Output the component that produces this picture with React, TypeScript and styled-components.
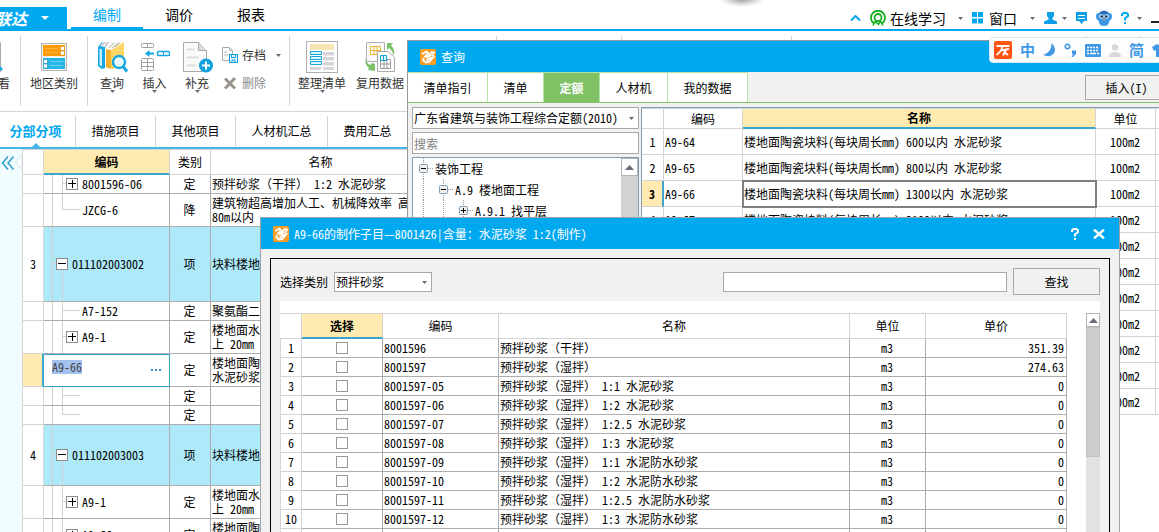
import React from "react";
import styled, { createGlobalStyle, css } from "styled-components";

const blue = "#00a8f0";
const lineBlue = "#3ba5d0";
const cream = "#ffebb0";
const light = "#d4d4d4";
const mid = "#adadad";
const panel = "#f1f1f1";
const sky = "#aee9fa";

const GlobalStyle = createGlobalStyle`
  *, *::before, *::after { box-sizing: border-box; }
  body {
    margin: 0;
    background: #fff;
    color: #000;
    font-family: "Noto Sans CJK SC", sans-serif;
    font-size: 12px;
    line-height: 14px;
    font-feature-settings: "hwid" 1;
  }
  button, input, select {
    font: inherit;
    font-feature-settings: "hwid" 1;
    color: inherit;
    margin: 0;
    padding: 0;
    border: 0;
    border-radius: 0;
    background: none;
    outline: none;
  }
  svg { display: block; flex: none; }
`;

/* ---------- page shell ---------- */

const Page = styled.div`
  position: relative;
  display: flex;
  flex-direction: column;
  height: 100vh;
  overflow: hidden;
  background: #fff;
`;

const TopBar = styled.header`
  display: flex;
  height: 31px;
  flex: none;
  border-bottom: 2px solid ${blue};
`;

const Brand = styled.button`
  display: flex;
  align-items: center;
  justify-content: flex-end;
  gap: 14px;
  width: 67px;
  height: 22px;
  margin: 7px 4px 0 0;
  padding-right: 18px;
  background: ${blue};
  color: #fff;
  font-size: 16px;
  font-weight: 700;
  font-style: italic;
  white-space: nowrap;
  overflow: hidden;
`;

const MenuTab = styled.button<{ $active?: boolean }>`
  width: 72px;
  height: 29px;
  font-size: 14px;
  color: ${(p) => (p.$active ? blue : "#000")};
  border-bottom: 2px solid ${(p) => (p.$active ? blue : "transparent")};
`;

const TopTools = styled.div`
  display: flex;
  align-items: center;
  gap: 9px;
  height: 29px;
  margin-left: auto;
  padding-top: 7px;
  overflow: hidden;
`;

const TopTool = styled.button<{ $gap?: number; $caretGap?: number }>`
  display: flex;
  align-items: center;
  gap: ${(p) => p.$gap ?? 5}px;
  font-size: 14px;
  white-space: nowrap;
  svg:last-child:not(:first-child) {
    margin-left: ${(p) => p.$caretGap ?? 0}px;
  }
`;

const TopShade = styled.svg`
  position: absolute;
  top: 0;
  left: 61%;
`;

/* ---------- ribbon ---------- */

const Ribbon = styled.div`
  display: flex;
  height: 81px;
  flex: none;
  overflow: hidden;
  border-bottom: 1px solid ${light};
`;

const RibbonGroup = styled.div<{ $w: number; $end?: boolean }>`
  display: flex;
  flex: none;
  width: ${(p) => p.$w}px;
  height: 70px;
  margin-top: 5px;
  justify-content: ${(p) => (p.$end ? "flex-end" : "flex-start")};
  padding-left: ${(p) => (p.$w > 70 ? 3 : 0)}px;
  border-right: 1px solid ${light};
  overflow: hidden;
`;

const RibbonButton = styled.button<{ $w: number }>`
  display: flex;
  flex-direction: column;
  align-items: center;
  flex: none;
  width: ${(p) => p.$w}px;
  height: 60px;
  padding-top: 4px;
  color: #333;
  white-space: nowrap;
`;

const RibbonIcon = styled.span`
  display: flex;
  align-items: center;
  justify-content: center;
  height: 34px;
  margin-bottom: 2px;
`;

const RibbonStack = styled.div`
  display: flex;
  flex-direction: column;
  gap: 14px;
  padding: 12px 0 0 4px;
`;

const SmallButton = styled.button<{ $muted?: boolean }>`
  display: flex;
  align-items: center;
  gap: 4px;
  height: 14px;
  color: ${(p) => (p.$muted ? "#8a8a8a" : "#333")};
  svg:last-child:not(:first-child) { margin-left: 6px; }
`;

/* ---------- section tabs ---------- */

const SectionTabs = styled.nav`
  display: flex;
  height: 37px;
  flex: none;
  align-items: flex-end;
  border-bottom: 2px solid #45b7e6;
`;

const SectionTab = styled.button<{ $w: number; $active?: boolean }>`
  position: relative;
  flex: none;
  width: ${(p) => p.$w}px;
  height: 31px;
  padding-bottom: 2px;
  border-right: 1px solid ${light};
  ${(p) =>
    p.$active &&
    css`
      font-size: 13px;
      font-weight: 700;
      color: ${blue};
      padding-right: 4px;
      &::after {
        content: "";
        position: absolute;
        left: 32px;
        bottom: 0;
        border: 4px solid transparent;
        border-top: 0;
        border-bottom-color: #45b7e6;
      }
    `}
`;

const Work = styled.main`
  display: flex;
  flex: 1;
  min-height: 0;
  overflow: hidden;
`;

const Rail = styled.aside`
  width: 22px;
  flex: none;
  background: #f0fcff;
`;

const GridArea = styled.div`
  flex: 1;
  border-left: 1px solid ${light};
`;

/* ---------- grids ---------- */

const Grid = styled.table`
  width: 100%;
  table-layout: fixed;
  border-collapse: separate;
  border-spacing: 0;
`;

const HeadCell = styled.th<{ $active?: boolean; $h: number }>`
  height: ${(p) => p.$h}px;
  padding: 0;
  font-weight: ${(p) => (p.$active ? 700 : 400)};
  border-top: 1px solid ${light};
  border-right: 1px solid ${light};
  border-bottom: ${(p) => (p.$active ? `2px solid ${lineBlue}` : `1px solid ${light}`)};
  background: ${(p) => (p.$active ? cream : "#fff")};
`;

const Cell = styled.td<{
  $h: number;
  $align?: string;
  $line?: string;
  $fill?: string;
  $flush?: boolean;
}>`
  height: ${(p) => p.$h}px;
  padding: ${(p) => (p.$flush ? "0" : "0 2px 0 1px")};
  text-align: ${(p) => p.$align ?? "left"};
  border-right: 1px solid ${(p) => p.$line ?? mid};
  border-bottom: 1px solid ${(p) => p.$line ?? mid};
  background: ${(p) => p.$fill ?? "transparent"};
  white-space: nowrap;
  overflow: hidden;
`;

const NumCell = styled(Cell)<{ $current?: boolean; $left?: boolean }>`
  padding: 0;
  text-align: center;
  border-color: ${light};
  ${(p) => p.$left && `border-left: 1px solid ${light};`}
  ${(p) =>
    p.$current &&
    css`
      background: ${cream};
      font-weight: 700;
      border-right: 2px solid ${lineBlue};
    `}
`;

const FramedCell = styled(Cell)`
  outline: 2px solid #808080;
  outline-offset: -1px;
`;

const TreeCell = styled.div<{ $h: number }>`
  display: flex;
  align-items: center;
  height: ${(p) => p.$h}px;
  overflow: hidden;
`;

const Expander = styled.button<{ $open?: boolean }>`
  position: relative;
  width: 12px;
  height: 12px;
  flex: none;
  margin-right: 4px;
  border: 1px solid #8c8c8c;
  background: #fff;
  ${(p) =>
    p.$open &&
    css`
      &::after {
        content: "";
        position: absolute;
        top: 11px;
        left: 5px;
        width: 1px;
        height: 40px;
        background: ${light};
      }
    `}
`;

const Editor = styled.div`
  display: flex;
  align-items: flex-start;
  justify-content: space-between;
  height: 32px;
  padding: 5px 7px 0 8px;
  background: #fff;
  border-top: 1px solid ${lineBlue};
`;

const EditorInput = styled.input`
  width: 30px;
  height: 14px;
  background: #a3c1ee;
  color: #444;
`;

const MoreButton = styled.button`
  width: 11px;
  height: 22px;
`;

/* full-width brackets keep their whole em inside half-width text */
const Wide = styled.span`
  font-feature-settings: normal;
`;

const Label = ({ text }: { text: string }) => (
  <>
    {text.split(/([（）])/).map((s, i) => (i % 2 ? <Wide key={i}>{s}</Wide> : s))}
  </>
);

/* ---------- windows ---------- */

const QueryWindow = styled.section`
  position: absolute;
  top: 40px;
  left: 407px;
  right: -20px;
  bottom: 0;
  display: flex;
  flex-direction: column;
  border: 1px solid #999;
  border-bottom: 0;
  background: ${panel};
`;

const TitleBar = styled.div`
  display: flex;
  align-items: center;
  gap: 5px;
  height: 31px;
  flex: none;
  padding-left: 12px;
  background: ${blue};
  color: #fff;
`;

const TitleButtons = styled.div`
  display: flex;
  gap: 14px;
  margin-left: auto;
  padding-right: 14px;
`;

const QueryTabs = styled.div`
  display: flex;
  height: 31px;
  flex: none;
  border-bottom: 1px solid #7fc36c;
`;

const QueryTab = styled.button<{ $w: number; $active?: boolean }>`
  width: ${(p) => p.$w}px;
  height: 30px;
  border-top: 1px solid #b5e3a5;
  border-right: 1px solid #b5e3a5;
  background: ${(p) => (p.$active ? "#81c267" : "#fff")};
  color: ${(p) => (p.$active ? "#fff" : "#000")};
  font-weight: ${(p) => (p.$active ? 700 : 400)};
`;

const PlainButton = styled.button<{ $w: number; $h: number }>`
  width: ${(p) => p.$w}px;
  height: ${(p) => p.$h}px;
  flex: none;
  border: 1px solid #a8a8a8;
  background: ${panel};
`;

const InsertButton = styled(PlainButton)`
  margin: 3px 10px 0 auto;
`;

const QueryBody = styled.div`
  display: flex;
  flex: 1;
  min-height: 0;
  gap: 2px;
  padding: 4px 0 0 4px;
`;

const QuerySide = styled.div`
  display: flex;
  flex-direction: column;
  gap: 3px;
  width: 227px;
  flex: none;
`;

const SelectBox = styled.div<{ $w?: string; $h: number }>`
  position: relative;
  width: ${(p) => p.$w ?? "100%"};
  height: ${(p) => p.$h}px;
  flex: none;
  select {
    appearance: none;
    width: 100%;
    height: 100%;
    padding-left: 1px;
    border: 1px solid #a8a8a8;
    background: #fff;
  }
  svg {
    position: absolute;
    right: 5px;
    top: calc(50% - 1px);
    pointer-events: none;
  }
`;

const TextBox = styled.input<{ $w?: string; $h: number }>`
  width: ${(p) => p.$w ?? "100%"};
  height: ${(p) => p.$h}px;
  padding-left: 1px;
  border: 1px solid #a8a8a8;
  background: #fff;
  &::placeholder { color: #808080; opacity: 1; }
`;

const TreeBox = styled.div`
  display: flex;
  flex: 1;
  border: 1px solid #7f9db9;
  background: #fff;
`;

const TreeRows = styled.ul`
  flex: 1;
  margin: 0;
  padding: 0;
  list-style: none;
  li {
    display: flex;
    align-items: center;
    height: 21px;
  }
`;

const ScrollTrack = styled.div<{ $w: number; $fill: string }>`
  width: ${(p) => p.$w}px;
  flex: none;
  background: ${(p) => p.$fill};
`;

const ScrollUp = styled.button<{ $size: number }>`
  display: flex;
  align-items: center;
  justify-content: center;
  width: 100%;
  height: ${(p) => p.$size}px;
  border: 1px solid #b4b4b4;
  background: #fff;
`;

const ScrollThumb = styled.div`
  height: 130px;
  background: #cdcdcd;
  border: 1px solid #c2c2c2;
`;

const QueryResults = styled.div`
  flex: 1;
  min-width: 0;
  border-top: 1px solid #7f9db9;
  border-left: 1px solid #7f9db9;
  background: #fff;
`;

const ItemWindow = styled.section`
  position: absolute;
  top: 217px;
  left: 260px;
  right: 39px;
  bottom: 0;
  display: flex;
  flex-direction: column;
  border: 1px solid #a3a3a3;
  border-bottom: 0;
  background: ${panel};
  overflow: hidden;
`;

const ItemFrame = styled.div`
  display: flex;
  flex-direction: column;
  flex: 1;
  min-height: 0;
  margin: 9px 9px 0;
  padding: 9px 9px 0;
  border: 1px solid #000;
  border-bottom: 0;
  overflow: hidden;
`;

const FilterRow = styled.div`
  display: flex;
  align-items: center;
  gap: 6px;
  height: 27px;
  flex: none;
  margin-bottom: 6px;
`;

const Spacer = styled.span`
  flex: 1;
`;

const ItemList = styled.div`
  display: flex;
  flex: 1;
  gap: 19px;
  min-height: 0;
  padding-top: 12px;
  background: #fff;
`;

const ItemGridWrap = styled.div`
  flex: 1;
  min-width: 0;
`;

const Tick = styled.input`
  appearance: none;
  display: block;
  width: 12px;
  height: 12px;
  margin: 0 auto;
  border: 1px solid #999;
  background: #fff;
`;

/* ---------- input method bar ---------- */

const ImeBar = styled.div`
  position: absolute;
  top: 37px;
  left: 989px;
  right: -20px;
  display: flex;
  align-items: center;
  gap: 8px;
  height: 26px;
  padding-left: 4px;
  border: 1px solid #d8e6f0;
  border-radius: 4px;
  background: #fcfdff;
  color: #4398e4;
  font-size: 15px;
  font-weight: 700;
  overflow: hidden;
`;

/* ---------- icons ---------- */

const Caret = ({ fill = "#666a78", w = 5 }: { fill?: string; w?: number }) => (
  <svg width={w} height={w > 5 ? 4 : 3} viewBox="0 0 5 3" preserveAspectRatio="none">
    <path d="M0 0h5L2.500 3z" fill={fill} />
  </svg>
);

const AppLogo = () => (
  <svg width="16" height="16" viewBox="0 0 16 16">
    <rect width="16" height="16" rx="2" fill="#f79c24" />
    <path d="M2 5 6.500 2.500 8 4 5 7.500l2 .5 5-5 2 .5-1.500 3.500" fill="none" stroke="#fff" strokeWidth="1.800" />
    <path d="M3.500 9v2.500L6 13.500l3-.5 4-4.500-3 .5-3.500 2.500" fill="none" stroke="#fff" strokeWidth="2" />
    <path d="M6 8.500 11.500 6" stroke="#fff" strokeWidth="1.500" />
  </svg>
);

const Headset = () => (
  <svg width="16" height="16" viewBox="0 0 16 16" fill="none" stroke="#14ae1c">
    <path d="M4 13.500A7 7 0 1 1 12 13.500" strokeWidth="1.800" />
    <circle cx="8" cy="7.500" r="3.500" strokeWidth="1.800" />
    <path d="M3 15.500 5.500 11l2 3M13 15.500 10.500 11 8 15" strokeWidth="1.500" />
  </svg>
);

const WindowsIcon = () => (
  <svg width="11" height="12" viewBox="0 0 11 12" fill={blue}>
    <path d="M0 0h5v5H0zM6 0h5v5H6zM0 6.500h5v5H0zM6 6.500h5v5H6z" />
  </svg>
);

const PersonIcon = () => (
  <svg width="13" height="12" viewBox="0 0 13 12" fill="#0f9fe6">
    <path d="M3 0h7v4L8.500 6v1.500l4.500 2V12H0V9.500l4.500-2V6L3 4z" />
  </svg>
);

const MessageIcon = () => (
  <svg width="11" height="12" viewBox="0 0 11 12">
    <path d="M0 0h11v9H8l-2.500 3L3 9H0z" fill="#0f9fe6" />
    <path d="M2 3.500h7M2 6.500h7" stroke="#fff" />
  </svg>
);

const Mascot = () => (
  <svg width="16" height="16" viewBox="0 0 16 16">
    <path d="M0 6Q0 3 3 3 8-2 13 3q3 0 3 3 0 4-2.500 4.500Q13 16 8 16T2.500 10.500Q0 10 0 6z" fill="#3a98e6" />
    <path d="M3.500 2.500Q8-1 12.500 2.500L11 4H5z" fill="#2b6cae" />
    <circle cx="5.500" cy="6.500" r="2.300" fill="#cfe3f6" />
    <circle cx="10.500" cy="6.500" r="2.300" fill="#cfe3f6" />
    <circle cx="5.800" cy="6.500" r="1.300" fill="#203040" />
    <circle cx="10.200" cy="6.500" r="1.300" fill="#203040" />
    <path d="M7 9h2l-1 2z" fill="#f0a020" />
  </svg>
);

const HelpIcon = ({ fill }: { fill: string }) => (
  <svg width="8" height="12" viewBox="0 0 8 12" fill="none" stroke={fill} strokeWidth="2">
    <path d="M1 4V2.500L2.500 1h3L7 2.500v1.500L4 6.500V8.500M4 10v2" />
  </svg>
);

const CloseIcon = () => (
  <svg width="12" height="10" viewBox="0 0 12 10" stroke="#fff" strokeWidth="2.400">
    <path d="M1 0.500 11 9.500M11 0.500 1 9.500" />
  </svg>
);

const ViewIcon = () => (
  <svg width="10" height="31" viewBox="0 0 10 31">
    <path d="M0 .5h7.500v29H0" fill="#fafafa" stroke="#aaa" />
    <path d="M3 22l6 6" stroke="#19a8e0" strokeWidth="3" />
  </svg>
);

const RegionIcon = () => (
  <svg width="26" height="28" viewBox="0 0 26 28">
    <rect x=".5" y=".5" width="25" height="27" fill="#f4f4f4" stroke="#b4b4b4" />
    <rect x="2" y="2" width="22" height="11" fill="#ff9c0a" />
    <path d="M4 5.500h13M4 9.500h13" stroke="#ffb347" />
    <path d="M19.500 3.500h4v4h-4zM19.500 8h4v4h-4z" fill="#fff" stroke="#e08a00" strokeWidth=".6" />
    <rect x="2" y="15" width="22" height="11" fill="#27b5e6" />
    <path d="M9 18.500h13M9 22.500h13" stroke="#6fd0f0" />
    <path d="M2.500 16.500h4v4h-4zM2.500 21h4v4h-4z" fill="#fff" stroke="#1089b8" strokeWidth=".6" />
  </svg>
);

const BooksIcon = () => (
  <svg width="31" height="32" viewBox="0 0 31 32">
    <path d="M1 6 5 1h6L8 7v20l-3 1-4-3z" fill="#12a8e4" />
    <path d="M2.500 7.500 5 8.500v17l-2.500-1.500z" fill="#c9eefb" />
    <path d="M3 5 6 1h9l-4 5H7z" fill="#f3f3f3" />
    <path d="M5 5 8 1M8 6l3-5" stroke="#999" strokeWidth=".8" />
    <path d="M9 8 14 9l13-8v23l-11 4-7-2z" fill="#ffd766" />
    <path d="M9 8v18l5 2V9z" fill="#f2b22c" />
    <path d="M9 7 14 1h12L16 8l-3 1z" fill="#f7f7f7" />
    <path d="M12 7 17 2M15 7l6-5M18 6l5-4" stroke="#b0a080" strokeWidth=".8" />
    <circle cx="22" cy="21" r="6" fill="#e9f8ff" stroke="#19a8e0" strokeWidth="2.400" />
    <path d="m26 25.500 4 5" stroke="#19a8e0" strokeWidth="3" />
  </svg>
);

const InsertIcon = () => (
  <svg width="30" height="30" viewBox="0 0 30 30" fill="none">
    <rect x="1.500" y="1.500" width="12" height="4" rx="1" stroke="#a0a0a0" />
    <path d="M7.500 1.500v4M7.500 17v11M1.500 20.500h12M1.500 24.500h12" stroke="#a0a0a0" />
    <rect x="1.500" y="16.500" width="12" height="12" rx="1" stroke="#a0a0a0" />
    <path d="M5 11.500 9.500 8v2.500H14v2H9.500V15z" fill="#12a8e4" />
    <rect x="17.500" y="9.500" width="12" height="4" rx="1" stroke="#12a8e4" strokeWidth="1.400" />
    <path d="M23.500 9.500v4" stroke="#12a8e4" />
  </svg>
);

const SupplementIcon = () => (
  <svg width="31" height="31" viewBox="0 0 31 31">
    <path d="M1.500.5h15l8 8v21h-23z" fill="#fafafa" stroke="#aaa" />
    <path d="M16.500.5v8h8" fill="#ddd" stroke="#aaa" />
    <path d="M4.500 7.500h8M4.500 15.500h12M4.500 23.500h9" stroke="#dcdcdc" strokeWidth="2" />
    <circle cx="24" cy="23.500" r="7" fill="#12a0de" />
    <path d="M24 19.500v8M20 23.500h8" stroke="#fff" strokeWidth="2" />
  </svg>
);

const ArchiveIcon = () => (
  <svg width="16" height="16" viewBox="0 0 16 16" fill="none">
    <path d="M.5.5h7l3 3v10H.5z" fill="#fafafa" stroke="#aaa" />
    <path d="M7.500.5v3h3M2 5h3M2 8h4" stroke="#bbb" />
    <rect x="7.500" y="7.500" width="8" height="8" fill="#e6f7fe" stroke="#12a0de" />
    <path d="M9.500 8v2.500h4V8M10 15.500V13h3v2.500" stroke="#12a0de" />
  </svg>
);

const DeleteIcon = () => (
  <svg width="16" height="13" viewBox="0 0 16 13" stroke="#9a958c" strokeWidth="3">
    <path d="M3 1.500 13 11.500M13 1 3 11.500" />
  </svg>
);

const ArrangeIcon = () => (
  <svg width="32" height="32" viewBox="0 0 32 32">
    <rect x=".5" y=".5" width="31" height="31" fill="#fff" stroke="#b0b0b0" />
    <rect x="4" y="3" width="24" height="6" fill="#f5e6b4" />
    <path d="M17 11h11v3.500H17zM17 16h11v3.500H17zM17 21h11v3.500H17zM17 26h11v3H17zM4 26h11v3H4z" fill="#d9d4da" />
    <path d="M4.500 10.500h11v3h-11zM4.500 15.500h11v3h-11zM4.500 20.500h11v3h-11z" fill="#dff5fd" stroke="#14a4d8" />
  </svg>
);

const ReuseIcon = () => (
  <svg width="30" height="31" viewBox="0 0 30 31">
    <path d="M1.500.5h18v19h-18z" fill="#fafafa" stroke="#b0b0b0" />
    <path d="M5.500 4.500h10v8h-10zM5.500 8.500h10M9 4.500v8M12 4.500v8" fill="#fff" stroke="#f0b432" />
    <path d="M12.500 9.500h11l6 6v14h-17z" fill="#fff" stroke="#aaa" />
    <path d="M15.500 17.500h10v9h-10zM19 17.500v9M22 17.500v9M15.500 22h10" fill="none" stroke="#999" />
    <path d="M15.500 13.500h6v5h-6zM18.500 13.500v5" fill="#e6f7fe" stroke="#14a4d8" />
    <path d="M20 1h8l-2 2q4 4 3 11-2-6-5-8l-2 2V1z" fill="#7cc068" />
    <path d="M1 16q0 5 4 7l2-2 3 1v7l-7-1 1-2q-5-4-3-10z" fill="#7cc068" />
  </svg>
);

const Minimise = () => (
  <svg width="8" height="12" viewBox="0 0 8 12">
    <path d="M0 9h8v2H0z" fill="#222" />
  </svg>
);

const ChevronUp = () => (
  <svg width="11" height="6" viewBox="0 0 11 6" fill="none" stroke={blue} strokeWidth="2">
    <path d="M1 5.500 5.500 1 10 5.500" />
  </svg>
);

const UpArrow = () => (
  <svg width="9" height="5" viewBox="0 0 9 5">
    <path d="M0 5 4.500 0 9 5z" fill="#6a6e7c" />
  </svg>
);

const ImeLogo = () => (
  <svg width="18" height="18" viewBox="0 0 18 18">
    <rect width="18" height="18" rx="2" fill="#ff5412" />
    <path d="M2.500 5h13M8.500 5Q8 10 2.500 14M7 9.500 15 8M12 8.500 9 14.500M10 11l4 3" fill="none" stroke="#fff" strokeWidth="1.800" />
  </svg>
);

const Moon = () => (
  <svg width="13" height="14" viewBox="0 0 13 14">
    <path d="M8.500 0Q14 5 11 10T0 12Q9 9 8.500 0z" fill="#4398e4" />
  </svg>
);

const Punctuation = () => (
  <svg width="13" height="14" viewBox="0 0 13 14">
    <circle cx="3.500" cy="3.500" r="2.200" fill="none" stroke="#4398e4" strokeWidth="1.600" />
    <path d="M8 7.500h4V11l-3 3H7.500L9 11H8z" fill="#4398e4" />
  </svg>
);

const Keyboard = () => (
  <svg width="16" height="13" viewBox="0 0 16 13">
    <rect width="16" height="13" rx="1" fill="#4398e4" />
    <path d="M2 3.500h12M2 6.500h12" stroke="#fff" strokeWidth="1.400" strokeDasharray="2 1" />
    <path d="M2 9.500h2M5 9.500h6M12 9.500h2" stroke="#fff" strokeWidth="1.400" />
  </svg>
);

const GreyPerson = () => (
  <svg width="12" height="13" viewBox="0 0 12 13" fill="#d8d8d8">
    <circle cx="6" cy="3.500" r="3.300" />
    <path d="M0 13q0-5 6-5t6 5z" />
  </svg>
);

const Shirt = () => (
  <svg width="16" height="13" viewBox="0 0 16 13">
    <path d="M0 3 5 0q3 2 6 0l5 3-2 4-2-1v7H4V6L2 7z" fill="#4398e4" />
  </svg>
);

const SignIcon = ({ plus }: { plus?: boolean }) => (
  <svg width="10" height="10" viewBox="0 0 10 10">
    <path d={plus ? "M1 4.500h8M5.500 1v8" : "M1 4.500h8"} stroke="#000" />
  </svg>
);

/* ---------- main grid ---------- */

type Kind = "parent" | "node" | "leaf" | "last" | "edit";

const bill: { no?: string; h: number; kind: Kind; code: string; type: string; name: string[] }[] = [
  { h: 19, kind: "node", code: "8001596-06", type: "定", name: ["预拌砂浆（干拌） 1:2 水泥砂浆"] },
  { h: 33, kind: "last", code: "JZCG-6", type: "降", name: ["建筑物超高增加人工、机械降效率 高", "80m以内"] },
  { no: "3", h: 75, kind: "parent", code: "011102003002", type: "项", name: ["块料楼地"] },
  { h: 19, kind: "leaf", code: "A7-152", type: "定", name: ["聚氨酯二"] },
  { h: 33, kind: "node", code: "A9-1", type: "定", name: ["楼地面水", "上 20mm"] },
  { h: 33, kind: "edit", code: "A9-66", type: "定", name: ["楼地面陶", "水泥砂浆"] },
  { h: 19, kind: "leaf", code: "", type: "定", name: [""] },
  { h: 19, kind: "last", code: "", type: "定", name: [""] },
  { no: "4", h: 61, kind: "parent", code: "011102003003", type: "项", name: ["块料楼地"] },
  { h: 33, kind: "node", code: "A9-1", type: "定", name: ["楼地面水", "上 20mm"] },
  { h: 33, kind: "node", code: "A9-66", type: "定", name: ["楼地面陶", "水泥砂浆"] },
];

const Guides = ({ kind, h }: { kind: Kind; h: number }) => {
  const m = Math.floor(h / 2) - 0.5;
  const w = kind === "parent" ? 12 : kind === "node" ? 22 : 38;
  const d =
    kind === "parent"
      ? `M8.500 0V${h}M8 ${m}h4`
      : `M8.500 0V${h}M18.500 0V${kind === "last" ? m : h}M18 ${m}h${kind === "node" ? 4 : 18}`;
  return (
    <svg width={w} height={h} viewBox={`0 0 ${w} ${h}`}>
      <path d={d} fill="none" stroke="#d0d0d0" />
    </svg>
  );
};

const BillGrid = () => (
  <Grid>
    <colgroup>
      <col style={{ width: 21 }} />
      <col style={{ width: 126 }} />
      <col style={{ width: 41 }} />
      <col style={{ width: 220 }} />
      <col />
    </colgroup>
    <thead>
      <tr>
        <HeadCell $h={26} />
        <HeadCell $h={26} $active>编码</HeadCell>
        <HeadCell $h={26}>类别</HeadCell>
        <HeadCell $h={26}>名称</HeadCell>
        <HeadCell $h={26} />
      </tr>
    </thead>
    <tbody>
      {bill.map((r, i) => {
        const fill = r.kind === "parent" ? sky : undefined;
        return (
          <tr key={i}>
            <NumCell $h={r.h} $current={r.kind === "edit"}>{r.no}</NumCell>
            <Cell $h={r.h} $fill={fill} $flush $line={r.kind === "edit" ? lineBlue : undefined}>
              {r.kind === "edit" ? (
                <Editor>
                  <EditorInput aria-label="编码" defaultValue={r.code} />
                  <MoreButton aria-label="更多">
                    <svg width="11" height="14" viewBox="0 0 11 14">
                      <path d="M0 5h2v2H0zM4 5h2v2H4zM8 5h2v2H8z" fill="#3c8fd0" />
                    </svg>
                  </MoreButton>
                </Editor>
              ) : (
                <TreeCell $h={r.h - 1}>
                  <Guides kind={r.kind} h={r.h - 1} />
                  {(r.kind === "parent" || r.kind === "node") && (
                    <Expander $open={r.kind === "parent"} aria-label="展开或折叠">
                      <SignIcon plus={r.kind === "node"} />
                    </Expander>
                  )}
                  {r.code}
                </TreeCell>
              )}
            </Cell>
            <Cell $h={r.h} $align="center" $fill={fill}>{r.type}</Cell>
            <Cell $h={r.h} $fill={fill}>
              {r.name.map((n, k) => (
                <div key={k}><Label text={n} /></div>
              ))}
            </Cell>
            <Cell $h={r.h} $fill={fill} />
          </tr>
        );
      })}
    </tbody>
  </Grid>
);

/* ---------- query window ---------- */

const quota = [
  ["A9-64", "楼地面陶瓷块料(每块周长mm) 600以内 水泥砂浆"],
  ["A9-65", "楼地面陶瓷块料(每块周长mm) 800以内 水泥砂浆"],
  ["A9-66", "楼地面陶瓷块料(每块周长mm) 1300以内 水泥砂浆"],
  ["A9-67", "楼地面陶瓷块料(每块周长mm) 2100以内 水泥砂浆"],
  ["", ""],
  ["", ""],
  ["", ""],
  ["", ""],
  ["", ""],
  ["", ""],
  ["", ""],
];

const chapters = ["装饰工程", "A.9 楼地面工程", "A.9.1 找平层"];

const ChapterGuide = ({ level, plus }: { level: number; plus: boolean }) => {
  const c = 10 + level * 20;
  const w = c + 12;
  return (
    <svg width={w} height="21" viewBox={`0 0 ${w} 21`} fill="none">
      {Array.from({ length: level + 1 }, (_, i) => (
        <path key={i} d={`M${10.5 + i * 20} 0V21`} stroke="#999" strokeDasharray="1 1" />
      ))}
      <path d={`M${c + 5} 10.500h6`} stroke="#999" strokeDasharray="1 1" />
      <rect x={c - 3.5} y="6.500" width="8" height="8" rx="1" fill="#f2f0ea" stroke="#7f9db9" />
      <path d={`M${c - 2} 10.500h5${plus ? `M${c + 0.5} 8v5` : ""}`} stroke="#000" />
    </svg>
  );
};

const Query = () => (
  <QueryWindow>
    <TitleBar>
      <AppLogo />
      查询
    </TitleBar>
    <QueryTabs>
      <QueryTab $w={80}>清单指引</QueryTab>
      <QueryTab $w={56}>清单</QueryTab>
      <QueryTab $w={56} $active>定额</QueryTab>
      <QueryTab $w={68}>人材机</QueryTab>
      <QueryTab $w={80}>我的数据</QueryTab>
      <InsertButton $w={83} $h={25}>插入(I)</InsertButton>
    </QueryTabs>
    <QueryBody>
      <QuerySide>
        <SelectBox $h={22}>
          <select aria-label="定额库">
            <option>广东省建筑与装饰工程综合定额(2010)</option>
          </select>
          <Caret />
        </SelectBox>
        <TextBox $h={22} aria-label="搜索" placeholder="搜索" />
        <TreeBox>
          <TreeRows>
            {chapters.map((c, i) => (
              <li key={c}>
                <ChapterGuide level={i} plus={i === 2} />
                {c}
              </li>
            ))}
          </TreeRows>
          <ScrollTrack $w={17} $fill="#d2d2d2">
            <ScrollUp $size={18} aria-label="向上滚动"><UpArrow /></ScrollUp>
          </ScrollTrack>
        </TreeBox>
      </QuerySide>
      <QueryResults>
        <Grid>
          <colgroup>
            <col style={{ width: 22 }} />
            <col style={{ width: 79 }} />
            <col style={{ width: 353 }} />
            <col style={{ width: 60 }} />
            <col />
          </colgroup>
          <thead>
            <tr>
              <HeadCell $h={21} />
              <HeadCell $h={21}>编码</HeadCell>
              <HeadCell $h={21} $active>名称</HeadCell>
              <HeadCell $h={21}>单位</HeadCell>
              <HeadCell $h={21} />
            </tr>
          </thead>
          <tbody>
            {quota.map(([code, name], i) => {
              const Name = i === 2 ? FramedCell : Cell;
              return (
                <tr key={i}>
                  <NumCell $h={26} $current={i === 2}>{i < 4 ? i + 1 : ""}</NumCell>
                  <Cell $h={26} $line={light}>{code}</Cell>
                  <Name $h={26} $line={light}>{name}</Name>
                  <Cell $h={26} $line={light} $align="center">100m2</Cell>
                  <Cell $h={26} $line={light} />
                </tr>
              );
            })}
          </tbody>
        </Grid>
      </QueryResults>
    </QueryBody>
  </QueryWindow>
);

/* ---------- item window ---------- */

const items = [
  ["8001596", "预拌砂浆（干拌）", "351.39"],
  ["8001597", "预拌砂浆（湿拌）", "274.63"],
  ["8001597-05", "预拌砂浆（湿拌） 1:1 水泥砂浆", "0"],
  ["8001597-06", "预拌砂浆（湿拌） 1:2 水泥砂浆", "0"],
  ["8001597-07", "预拌砂浆（湿拌） 1:2.5 水泥砂浆", "0"],
  ["8001597-08", "预拌砂浆（湿拌） 1:3 水泥砂浆", "0"],
  ["8001597-09", "预拌砂浆（湿拌） 1:1 水泥防水砂浆", "0"],
  ["8001597-10", "预拌砂浆（湿拌） 1:2 水泥防水砂浆", "0"],
  ["8001597-11", "预拌砂浆（湿拌） 1:2.5 水泥防水砂浆", "0"],
  ["8001597-12", "预拌砂浆（湿拌） 1:3 水泥防水砂浆", "0"],
];

const Items = () => (
  <ItemWindow>
    <TitleBar>
      <AppLogo />
      A9-66的制作子目—8001426|含量：水泥砂浆 1:2(制作)
      <TitleButtons>
        <button aria-label="帮助"><HelpIcon fill="#fff" /></button>
        <button aria-label="关闭"><CloseIcon /></button>
      </TitleButtons>
    </TitleBar>
    <ItemFrame>
      <FilterRow>
        <label htmlFor="kind">选择类别</label>
        <SelectBox $w="98px" $h={20}>
          <select id="kind">
            <option>预拌砂浆</option>
          </select>
          <Caret />
        </SelectBox>
        <Spacer />
        <TextBox $w="284px" $h={20} aria-label="查找内容" />
        <PlainButton $w={87} $h={27}>查找</PlainButton>
      </FilterRow>
      <ItemList>
        <ItemGridWrap>
          <Grid>
            <colgroup>
              <col style={{ width: 22 }} />
              <col style={{ width: 81 }} />
              <col style={{ width: 116 }} />
              <col />
              <col style={{ width: 76 }} />
              <col style={{ width: 141 }} />
            </colgroup>
            <thead>
              <tr>
                <HeadCell $h={26} />
                <HeadCell $h={26} $active>选择</HeadCell>
                <HeadCell $h={26}>编码</HeadCell>
                <HeadCell $h={26}>名称</HeadCell>
                <HeadCell $h={26}>单位</HeadCell>
                <HeadCell $h={26}>单价</HeadCell>
              </tr>
            </thead>
            <tbody>
              {items.map(([code, name, price], i) => (
                <tr key={code}>
                  <NumCell $h={19} $left>{i + 1}</NumCell>
                  <Cell $h={19}><Tick type="checkbox" aria-label={`选择 ${code}`} /></Cell>
                  <Cell $h={19}>{code}</Cell>
                  <Cell $h={19}><Label text={name} /></Cell>
                  <Cell $h={19} $align="center">m3</Cell>
                  <Cell $h={19} $align="right">{price}</Cell>
                </tr>
              ))}
              <tr>
                <NumCell $h={19} $left />
                <Cell $h={19} />
                <Cell $h={19} />
                <Cell $h={19} />
                <Cell $h={19} />
                <Cell $h={19} />
              </tr>
            </tbody>
          </Grid>
        </ItemGridWrap>
        <ScrollTrack $w={14} $fill="#e2e2e2">
          <ScrollUp $size={14} aria-label="向上滚动"><UpArrow /></ScrollUp>
          <ScrollThumb />
        </ScrollTrack>
      </ItemList>
    </ItemFrame>
  </ItemWindow>
);

/* ---------- page ---------- */

const Big = ({ w, icon, label, menu }: { w: number; icon: React.ReactNode; label: string; menu?: boolean }) => (
  <RibbonButton $w={w}>
    <RibbonIcon>{icon}</RibbonIcon>
    {label}
    {menu && <Caret />}
  </RibbonButton>
);

export default function App() {
  return (
    <Page>
      <GlobalStyle />
      <TopBar>
        <Brand>
          联达
          <Caret fill="#fff" w={8} />
        </Brand>
        <MenuTab $active>编制</MenuTab>
        <MenuTab>调价</MenuTab>
        <MenuTab>报表</MenuTab>
        <TopTools>
          <TopTool aria-label="收起"><ChevronUp /></TopTool>
          <TopTool $gap={4} $caretGap={8}><Headset />在线学习<Caret /></TopTool>
          <TopTool $gap={6} $caretGap={7}><WindowsIcon />窗口<Caret /></TopTool>
          <TopTool aria-label="用户"><PersonIcon /><Caret /></TopTool>
          <TopTool aria-label="消息"><MessageIcon /></TopTool>
          <TopTool aria-label="助手"><Mascot /></TopTool>
          <TopTool $gap={8} aria-label="帮助"><HelpIcon fill={blue} /><Caret /></TopTool>
          <TopTool aria-label="最小化"><Minimise /></TopTool>
        </TopTools>
      </TopBar>
      <TopShade width="70" height="8" viewBox="0 0 70 8">
        <defs>
          <radialGradient id="shade">
            <stop offset="0" stopColor="#777" stopOpacity=".8" />
            <stop offset=".5" stopColor="#999" stopOpacity=".45" />
            <stop offset="1" stopColor="#aaa" stopOpacity="0" />
          </radialGradient>
        </defs>
        <ellipse cx="35" cy="-1" rx="23" ry="8" fill="url(#shade)" />
      </TopShade>
      <Ribbon>
        <RibbonGroup $w={21} $end>
          <Big w={44} icon={<ViewIcon />} label="查看" />
        </RibbonGroup>
        <RibbonGroup $w={67}>
          <Big w={66} icon={<RegionIcon />} label="地区类别" />
        </RibbonGroup>
        <RibbonGroup $w={202}>
          <Big w={42} icon={<BooksIcon />} label="查询" menu />
          <Big w={43} icon={<InsertIcon />} label="插入" menu />
          <Big w={42} icon={<SupplementIcon />} label="补充" menu />
          <RibbonStack>
            <SmallButton><ArchiveIcon />存档<Caret /></SmallButton>
            <SmallButton $muted><DeleteIcon />删除</SmallButton>
          </RibbonStack>
        </RibbonGroup>
        <RibbonGroup $w={207}>
          <Big w={58} icon={<ArrangeIcon />} label="整理清单" menu />
          <Big w={58} icon={<ReuseIcon />} label="复用数据" />
        </RibbonGroup>
        <RibbonGroup $w={125} />
        <RibbonGroup $w={170} />
        <RibbonGroup $w={295} />
        <RibbonGroup $w={54} />
      </Ribbon>
      <SectionTabs>
        <SectionTab $w={76} $active>分部分项</SectionTab>
        <SectionTab $w={80}>措施项目</SectionTab>
        <SectionTab $w={80}>其他项目</SectionTab>
        <SectionTab $w={92}>人材机汇总</SectionTab>
        <SectionTab $w={80}>费用汇总</SectionTab>
      </SectionTabs>
      <Work>
        <Rail>
          <button aria-label="展开侧栏">
            <svg width="22" height="30" viewBox="0 0 22 30" fill="none">
              <path d="M22 6 15.500 13 22 20z" fill="#fff" stroke="#d6e2e6" />
              <path d="M8 7.500 2.500 14 8 20.500M13.500 7.500 8 14l5.500 6.500" stroke="#2f9fcc" strokeWidth="1.500" />
            </svg>
          </button>
        </Rail>
        <GridArea>
          <BillGrid />
        </GridArea>
      </Work>
      <Query />
      <ImeBar>
        <ImeLogo />
        <span>中</span>
        <Moon />
        <Punctuation />
        <Keyboard />
        <GreyPerson />
        <span>简</span>
        <Shirt />
      </ImeBar>
      <Items />
    </Page>
  );
}
